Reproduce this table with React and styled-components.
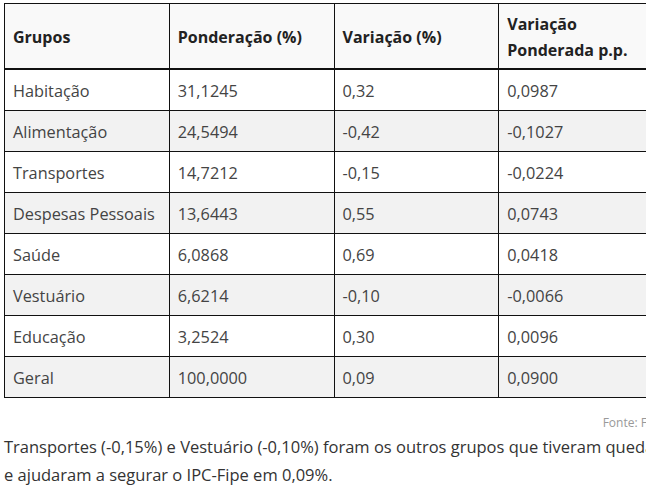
import React from 'react';
import styled, { createGlobalStyle } from 'styled-components';

const GlobalStyle = createGlobalStyle`
  html, body {
    margin: 0;
    padding: 0;
    background: #fff;
    overflow: hidden;
  }
  body {
    font-family: "Open Sans", "DejaVu Sans", sans-serif;
    color: #333;
  }
`;

const Page = styled.div`
  width: 660px;
  padding: 3px 0 0 4px;
`;

const Table = styled.table`
  width: 660px;
  border-collapse: collapse;
  table-layout: fixed;
`;

const HeadCell = styled.th`
  text-align: left;
  font-size: 16px;
  font-weight: 700;
  color: #222;
  background: #f9f9f9;
  border: 1px solid #111;
  border-bottom: 2px solid #111;
  padding: 7px 8px 5px;
  height: 52px;
  line-height: 26px;
  vertical-align: middle;
  white-space: nowrap;
`;

const Row = styled.tr`
  background: ${(p) => (p.$striped ? '#f2f2f2' : '#fff')};
`;

const Cell = styled.td`
  border: 1px solid #111;
  padding: 9px 8px 7px;
  font-size: 16.3px;
  line-height: 24px;
  color: #444;
  white-space: nowrap;
`;

const Source = styled.div`
  text-align: right;
  font-size: 12px;
  color: #999;
  margin-top: 17px;
  line-height: 16px;
`;

const Paragraph = styled.p`
  margin: 2px 0 0;
  font-size: 16.5px;
  line-height: 28px;
  color: #333;
  white-space: nowrap;
`;

const rows = [
  ['Habitação', '31,1245', '0,32', '0,0987'],
  ['Alimentação', '24,5494', '-0,42', '-0,1027'],
  ['Transportes', '14,7212', '-0,15', '-0,0224'],
  ['Despesas Pessoais', '13,6443', '0,55', '0,0743'],
  ['Saúde', '6,0868', '0,69', '0,0418'],
  ['Vestuário', '6,6214', '-0,10', '-0,0066'],
  ['Educação', '3,2524', '0,30', '0,0096'],
  ['Geral', '100,0000', '0,09', '0,0900'],
];

export default function App() {
  return (
    <Page>
      <GlobalStyle />
      <Table>
        <thead>
          <tr>
            <HeadCell>Grupos</HeadCell>
            <HeadCell>Ponderação (%)</HeadCell>
            <HeadCell>Variação (%)</HeadCell>
            <HeadCell>Variação<br />Ponderada p.p.</HeadCell>
          </tr>
        </thead>
        <tbody>
          {rows.map((r, i) => (
            <Row key={r[0]} $striped={i % 2 === 1}>
              {r.map((c, j) => (
                <Cell key={j}>{c}</Cell>
              ))}
            </Row>
          ))}
        </tbody>
      </Table>
      <Source>Fonte: Fipe</Source>
      <Paragraph>
        Transportes (-0,15%) e Vestuário (-0,10%) foram os outros grupos que tiveram queda
        <br />
        e ajudaram a segurar o IPC-Fipe em 0,09%.
      </Paragraph>
    </Page>
  );
}
